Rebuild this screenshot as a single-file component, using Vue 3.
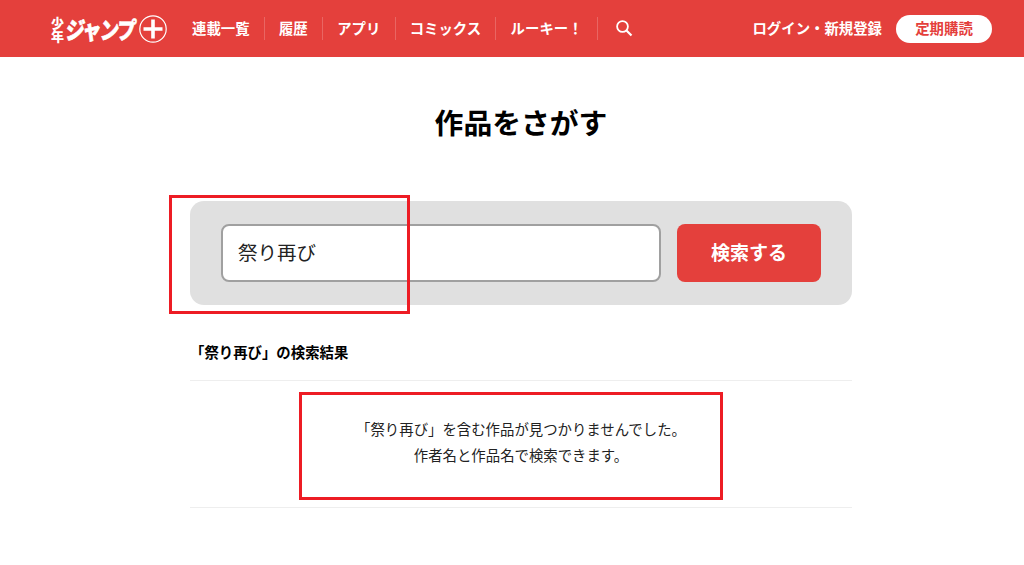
<script setup>
const nav = ['連載一覧', '履歴', 'アプリ', 'コミックス', 'ルーキー！']
</script>

<template>
  <div class="page">
    <header class="header">
      <div class="logo">
        <span class="logo-small">少年</span>
        <span class="logo-main">ジャンプ</span>
        <svg class="logo-plus" width="28" height="28" viewBox="0 0 28 28">
          <circle cx="14" cy="14" r="13.2" fill="none" stroke="#fff" stroke-width="1.2" />
          <path d="M14 4.5v19M4.5 14h19" stroke="#fff" stroke-width="3.6" fill="none" />
        </svg>
      </div>
      <nav class="nav">
        <a v-for="item in nav" :key="item" class="nav-item">{{ item }}</a>
        <a class="nav-item nav-search">
          <svg width="18" height="18" viewBox="0 0 18 18">
            <circle cx="7.5" cy="7.5" r="5.4" fill="none" stroke="#fff" stroke-width="1.8" />
            <path d="M11.5 11.5l5 5" stroke="#fff" stroke-width="2.2" fill="none" />
          </svg>
        </a>
      </nav>
      <a class="login">ログイン・新規登録</a>
      <a class="subscribe">定期購読</a>
    </header>

    <main class="main">
      <h1 class="title">作品をさがす</h1>
      <form class="search" @submit.prevent>
        <input class="search-input" type="text" value="祭り再び" />
        <button class="search-button" type="submit">検索する</button>
      </form>
      <h2 class="result-title">「祭り再び」の検索結果</h2>
      <div class="result-body">
        <p>「祭り再び」を含む作品が見つかりませんでした。</p>
        <p>作者名と作品名で検索できます。</p>
      </div>
    </main>

    <div class="mark mark-input"></div>
    <div class="mark mark-message"></div>
  </div>
</template>

<style scoped>
.page {
  position: relative;
  width: 1024px;
  height: 565px;
  overflow: hidden;
  background: #fff;
  color: #000;
  font-family: "Noto Sans CJK JP", "Noto Sans", sans-serif;
}
.header {
  display: flex;
  align-items: center;
  height: 57px;
  padding: 0 32px 0 50px;
  background: #e4403c;
  box-sizing: border-box;
  color: #fff;
}
.logo {
  display: flex;
  align-items: center;
  width: 118px;
  height: 30px;
  flex: none;
}
.logo-small {
  writing-mode: vertical-rl;
  font-size: 13px;
  line-height: 14px;
  font-weight: 900;
  width: 14px;
  margin-top: 2px;
  flex: none;
}
.logo-main {
  font-size: 19px;
  line-height: 30px;
  font-weight: 900;
  letter-spacing: -1.4px;
  white-space: nowrap;
  width: 73px;
  margin-left: 2px;
  flex: none;
  transform-origin: left center;
  transform: scaleY(1.25) skewX(-6deg);
  -webkit-text-stroke: 0.5px #fff;
}
.logo-plus {
  flex: none;
  margin-top: 1px;
}
.nav {
  display: flex;
  align-items: center;
  margin-left: 24px;
}
.nav-item {
  font-size: 14.4px;
  font-weight: 700;
  line-height: 21px;
  padding: 0 14.2px 2px;
  border-right: 1px solid rgba(255, 255, 255, 0.2);
  white-space: nowrap;
}
.nav-item:first-child {
  padding-left: 0;
}
.nav-search {
  display: flex;
  align-items: center;
  border-right: 0;
  padding-left: 17px;
}
.login {
  margin-left: auto;
  padding-bottom: 2px;
  font-size: 14.4px;
  font-weight: 700;
  white-space: nowrap;
}
.subscribe {
  width: 96px;
  height: 28px;
  margin-left: 14px;
  padding-bottom: 2px;
  box-sizing: border-box;
  display: flex;
  align-items: center;
  justify-content: center;
  border-radius: 14px;
  background: #fff;
  color: #e4403c;
  font-size: 14.4px;
  font-weight: 700;
}
.main {
  width: 662px;
  margin-left: 190px;
  display: flex;
  flex-direction: column;
}
.title {
  margin: 0;
  padding-top: 44px;
  height: 100px;
  box-sizing: border-box;
  text-align: center;
  font-size: 28.8px;
  line-height: 42px;
  font-weight: 700;
}
.search {
  display: flex;
  gap: 16px;
  height: 104px;
  margin-top: 44px;
  padding: 23px 31px;
  box-sizing: border-box;
  border-radius: 14px;
  background: #e0e0e0;
}
.search-input {
  width: 440px;
  height: 58px;
  box-sizing: border-box;
  padding: 0 15px 4px;
  border: 2px solid #a0a0a0;
  border-radius: 8px;
  background: #fff;
  color: #222;
  font: 400 19.5px "Noto Sans CJK JP", sans-serif;
  outline: none;
}
.search-button {
  width: 144px;
  height: 58px;
  padding: 0 0 4px;
  border: 0;
  border-radius: 8px;
  background: #e4403c;
  color: #fff;
  font: 700 19px "Noto Sans CJK JP", sans-serif;
}
.result-title {
  margin: 0;
  height: 76px;
  padding-top: 36px;
  box-sizing: border-box;
  border-bottom: 1px solid #eee;
  font-size: 14.4px;
  line-height: 21px;
  font-weight: 700;
  white-space: nowrap;
}
.result-body {
  height: 127px;
  padding-top: 35px;
  box-sizing: border-box;
  border-bottom: 1px solid #eee;
  text-align: center;
  font-size: 14.4px;
  line-height: 26px;
  color: #222;
}
.result-body p {
  margin: 0;
}
.mark {
  position: absolute;
  box-sizing: border-box;
  border: 3px solid #ed1c24;
  pointer-events: none;
}
.mark-input {
  left: 169px;
  top: 195px;
  width: 241px;
  height: 119px;
}
.mark-message {
  left: 299px;
  top: 392px;
  width: 424px;
  height: 108px;
}
</style>
